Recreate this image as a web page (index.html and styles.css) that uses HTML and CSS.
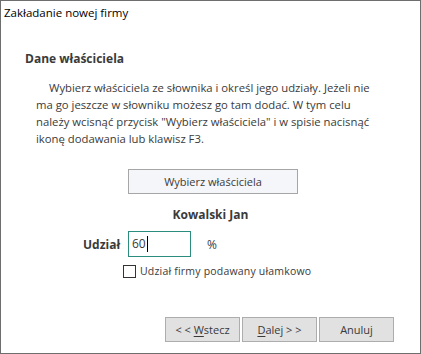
FILE: index.html
```html
<!DOCTYPE html>
<html lang="pl">
<head>
<meta charset="utf-8">
<title>Zakładanie nowej firmy</title>
<link rel="stylesheet" href="styles.css">
</head>
<body>
<div class="window">
  <div class="title">Zakładanie nowej firmy</div>
  <h1 class="heading">Dane właściciela</h1>
  <p class="info">Wybierz właściciela ze słownika i określ jego udziały. Jeżeli nie<br>ma go jeszcze w słowniku możesz go tam dodać. W tym celu<br>należy wcisnąć przycisk "Wybierz właściciela" i w spisie nacisnąć<br>ikonę dodawania lub klawisz F3.</p>
  <div class="pick-row"><button class="pick">Wybierz właściciela</button></div>
  <div class="owner">Kowalski Jan</div>
  <div class="share-row">
    <label class="share-label">Udział</label>
    <div class="share-input">60<span class="caret"></span></div>
    <span class="pct">%</span>
  </div>
  <div class="check-row">
    <span class="checkbox"></span>
    <span class="check-label">Udział firmy podawany ułamkowo</span>
  </div>
  <div class="buttons">
    <button class="btn">&lt; &lt; <u>W</u>stecz</button>
    <button class="btn"><u>D</u>alej &gt; &gt;</button>
    <button class="btn">Anuluj</button>
  </div>
</div>
</body>
</html>
```

FILE: styles.css
```css
* { box-sizing: border-box; }
html, body { margin: 0; padding: 0; background: #fff; }
body { font-family: "Open Sans", "Noto Sans", sans-serif; font-size: 11px; color: #3a3a3a; }
.window {
  width: 421px;
  height: 354px;
  border: 1px solid #6e6e6e;
  background: #fff;
}
.title {
  color: #000;
  font-size: 11.5px;
  line-height: 16px;
  padding: 4px 0 0 3px;
}
.heading {
  margin: 30px 0 0 24px;
  font-size: 12px;
  font-weight: 700;
  line-height: 16px;
  color: #3a3a3a;
}
.info {
  margin: 12px 0 0 35px;
  font-size: 11.3px;
  line-height: 17px;
  text-indent: 13px;
  white-space: nowrap;
}
.pick-row { display: flex; margin-top: 22px; padding-left: 127px; }
.pick {
  width: 170px;
  height: 25px;
  border: 1px solid #a6a6a6;
  background: #f4f6fa;
  font: inherit;
  color: #3a3a3a;
  padding: 0;
}
.owner {
  text-align: center;
  font-weight: 700;
  font-size: 12px;
  margin-top: 13px;
  line-height: 16px;
}
.share-row {
  display: flex;
  align-items: center;
  margin-top: 8px;
  padding-left: 82px;
  height: 26px;
}
.share-label { font-weight: 700; font-size: 12px; width: 45px; }
.share-input {
  width: 63px;
  height: 26px;
  border: 1px solid #2a8d7e;
  padding: 4px 0 0 3px;
  font-size: 12px;
  line-height: 16px;
  display: flex;
  align-items: flex-start;
}
.caret { display: inline-block; width: 1px; height: 16px; background: #000; margin-left: 1px; }
.pct { margin-left: 16px; font-size: 12px; }
.check-row {
  display: flex;
  align-items: center;
  margin-top: 7px;
  padding-left: 122px;
  gap: 4px;
}
.checkbox { width: 13px; height: 13px; border: 1px solid #333; background: #fff; }
.check-label { font-size: 10.5px; letter-spacing: 0.2px; }
.buttons {
  display: flex;
  gap: 2px;
  margin-top: 39px;
  padding-left: 164px;
}
.btn {
  width: 75px;
  height: 25px;
  border: 1px solid #adadad;
  background: #e1e1e1;
  font: inherit;
  color: #3a3a3a;
  padding: 0;
}
.btn u { text-underline-offset: 2px; }
```
